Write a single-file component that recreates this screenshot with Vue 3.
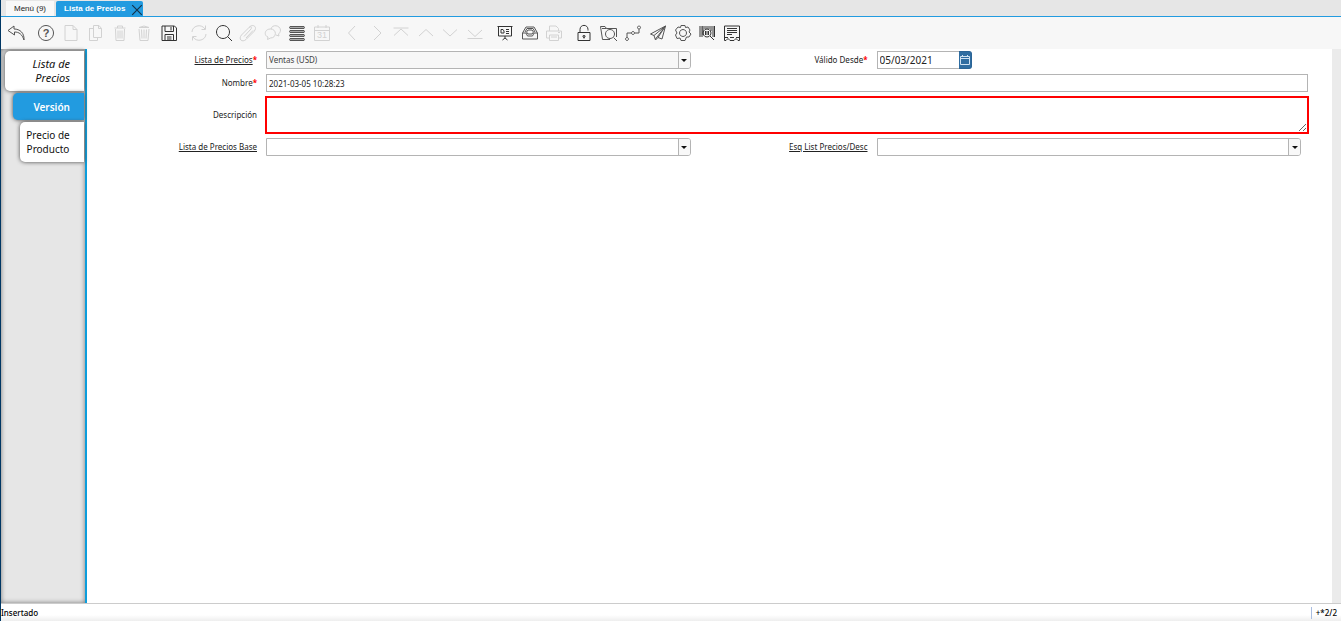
<script setup>
import { ref } from 'vue'

const priceList = ref('Ventas (USD)')
const name = ref('2021-03-05 10:28:23')
const validFrom = ref('05/03/2021')
const description = ref('')
const basePriceList = ref('')
const discountSchema = ref('')

const groups = [
  { size: 1, items: [
    { label: 'Deshacer', d: 'M8 3L2 7.500L8.500 12V9C13 9 16 11 18 17C18.500 10 14 6 8 6Z' }
  ] },
  { size: 6, items: [
    { label: 'Ayuda', d: 'M10 2.500a7.500 7.500 0 1 0 .01 0Z', text: '?', bold: true },
    { label: 'Nuevo', off: true, d: 'M4 2.500H12L16 6.500V17.500H4ZM12 2.500V6.500H16' },
    { label: 'Copiar', off: true, d: 'M8.500 2.500H14L16.500 5.500V14.500H8.500ZM13.500 2.500V5.500H16.500M8 5.500H4L4.500 5.500V17.500H12.500V15' },
    { label: 'Eliminar', off: true, d: 'M4.500 5H15.500M7.500 5V3H12.500V5M5.500 6L6 17.500H14L14.500 6M8 7.500V15.500M10 7.500V15.500M12 7.500V15.500' },
    { label: 'Eliminar selección', off: true, d: 'M5 4.500Q10 1.500 15 4.500ZM5 6L6 17.500H14L15 6M7.500 6.500L8 15.500M10 6.500V15.500M12.500 6.500L12 15.500' },
    { label: 'Guardar', strong: true, d: 'M3 3H15.500L17.500 5V17.500H3ZM6 3V8.500H14.500V3M12 4V7.500M6 17.500V11.500H14.500V17.500M8 14H12.500M8 16H12.500' }
  ] },
  { size: 6, items: [
    { label: 'Refrescar', off: true, d: 'M3 9C3 3 12 0 16 6M16.500 2.500V6.500H12.500M17 11C17 17 8 20 4 14M3.500 17.500V13.500H7.500' },
    { label: 'Buscar', strong: true, d: 'M9 2.500a6.500 6.500 0 1 0 .01 0ZM13.500 13.500L18 18' },
    { label: 'Adjunto', off: true, d: 'M6 13.500L13 6C14.500 4 12 3 11 4.500L3.500 12C0 16 4 20 8 16.500L16 8.500C20 4 15 0 11 4.500M8 15L15 7.500' },
    { label: 'Chat', off: true, d: 'M8 6C9 1 17 2 17.500 7C17.500 9 16.500 10 15.500 11L16 13L13 12M7.500 6C1 6 1 13 5 14L4.500 16.500L7.500 15C14 15 14 6 7.500 6Z' },
    { label: 'Cuadrícula', bars: true, d: 'M3 3.500H17Q18 4.500 17 5.500H3Q2 4.500 3 3.500ZM3 7.500H17Q18 8.500 17 9.500H3Q2 8.500 3 7.500ZM3 11.500H17Q18 12.500 17 13.500H3Q2 12.500 3 11.500ZM3 15.500H17Q18 16.500 17 17.500H3Q2 16.500 3 15.500Z' },
    { label: 'Calendario', off: true, d: 'M2.500 4H17.500V17.500H2.500ZM2.500 7.500H17.500M6 2V5M14 2V5', text: '31' }
  ] },
  { size: 6, items: [
    { label: 'Anterior', off: true, d: 'M13 3L6.500 10L13 17' },
    { label: 'Siguiente', off: true, d: 'M7 3L14 10L7 17' },
    { label: 'Primero', off: true, d: 'M2.500 5H17.500M3 12.500L10 6L17 12.500' },
    { label: 'Subir', off: true, d: 'M3 13L10 6.500L17 13' },
    { label: 'Bajar', off: true, d: 'M3 6.500L10 13L17 6.500' },
    { label: 'Último', off: true, d: 'M3 7L10 13.500L17 7M2.500 15.500H17.500' }
  ] },
  { size: 3, items: [
    { label: 'Informe', strong: true, d: 'M2.500 3.500H17.500M3.500 4V13H16.500V4M10 13V15M7.500 17L10 15L12.500 17M6 6.500H8L9 8V10H6ZM11 6.500H14M11 8.500H14M11 10.500H14' },
    { label: 'Archivo', d: 'M2.500 10L6 4H14L17.500 10V16H2.500ZM3 10H6L7.500 13H12.500L14 10H17M5 9L7 5.500H13L15 9M6.500 9L8 7H12L13.500 9L12 11H8Z' },
    { label: 'Imprimir', off: true, d: 'M5.500 8V3H12L14.500 5.500V8M5 15H2.500V8H17.500V15H15M5.500 12H14.500V17.500H5.500ZM7 14H13M14 9.500H16' }
  ] },
  { size: 7, items: [
    { label: 'Bloquear', strong: true, d: 'M4 9.500H16V17.500H4ZM6 9V6.500C6 1 14 1 14 6.500V7.500M10 12.500a1 1 0 1 0 .01 0ZM10 14V15.500' },
    { label: 'Detalle', d: 'M11 16.500H3.500L1.500 3.500H6L7.500 5.500H17.500V14M3 5.500H7.500M11 6.500a4.500 4.500 0 1 0 .01 0ZM14.500 14.500L18 18' },
    { label: 'Flujo', d: 'M4 14.500a1.500 1.500 0 1 0 .01 0ZM10 8.500a1.500 1.500 0 1 0 .01 0ZM16 3a1.500 1.500 0 1 0 .01 0ZM4 14.500V10H8.500M11.500 10H16V6' },
    { label: 'Solicitudes', d: 'M17.500 3L2.500 11L6 12.500L7.500 17L10 14.500L14 16ZM6 12.500L17.500 3L7.500 16M10 14.500L17.500 3' },
    { label: 'Proceso', d: 'M8 2.500H12L12.500 4.500L15 4L17 7L16 9L18 11L16 14L13.500 14L12 17.500H8L7 15L4 15.500L2.500 12L4 10L2.500 7L5 4L7.500 4.500ZM10 6.500a3.500 3.500 0 1 0 .01 0Z' },
    { label: 'Información de producto', strong: true, d: 'M3 3V14M5 3V14M6 3V12M8 3V6M10 3V6M12 3V6M14 3V8M16 3V14M17.500 3V14M10 6a4 4 0 1 0 .01 0ZM8.500 8V12M10 8V12M11.500 8V12M13 13L17 17' },
    { label: 'Formulario', strong: true, d: 'M2.500 14.500V3H17.500V14.500M5 5.500H15M5 7.500H15M5 9.500H15M5 11.500H10M2 14.500H6M8 14.500H12M14 14.500H18M2.500 14.500V17.500H4L6 15.500L8 17.500H12L14 15.500L16 17.500H17.500V14.500' }
  ] }
]
</script>

<template>
  <div class="window">
    <nav class="tabs" aria-label="Ventanas">
      <button class="tab">Menú (9)</button>
      <div class="tab active">
        <button class="tab-title">Lista de Precios</button>
        <button class="close" aria-label="Cerrar">
          <svg viewBox="0 0 10 10"><path d="M1 1L9 9M9 1L1 9" /></svg>
        </button>
      </div>
    </nav>

    <div class="toolbar" role="toolbar" aria-label="Acciones">
      <div v-for="(group, i) in groups" :key="i" class="group" :class="'g' + group.size">
        <button
          v-for="item in group.items"
          :key="item.label"
          class="tool"
          :class="{ strong: item.strong, bars: item.bars }"
          :disabled="item.off"
          :aria-label="item.label"
        >
          <svg viewBox="0 0 20 20">
            <path :d="item.d" />
            <text v-if="item.text" x="10" :y="item.bold ? 14 : 15" :class="{ bold: item.bold }">{{ item.text }}</text>
          </svg>
        </button>
      </div>
    </div>

    <div class="body">
      <aside class="side">
        <button class="level parent">Lista de Precios</button>
        <button class="level current">Versión</button>
        <button class="level child">Precio de Producto</button>
      </aside>

      <main class="content">
        <form class="form" @submit.prevent>
          <label for="price-list"><a href="#">Lista de Precios</a><b>*</b></label>
          <div class="combo readonly">
            <select id="price-list" v-model="priceList"><option>Ventas (USD)</option></select>
            <span class="arrow"></span>
          </div>
          <label for="valid-from">Válido Desde<b>*</b></label>
          <div class="date">
            <input id="valid-from" v-model="validFrom" type="text">
            <button type="button" aria-label="Abrir calendario">
              <svg viewBox="0 0 12 12"><path d="M1.500 2.500H10.500V10.500H1.500ZM1.500 4.500H10.500M3.500 1V3M8.500 1V3" /></svg>
            </button>
          </div>

          <label for="name">Nombre<b>*</b></label>
          <input id="name" v-model="name" class="text wide" type="text">

          <label for="description">Descripción</label>
          <textarea id="description" v-model="description" class="wide"></textarea>

          <label for="base-list"><a href="#">Lista de Precios Base</a></label>
          <div class="combo">
            <select id="base-list" v-model="basePriceList"><option value=""></option></select>
            <span class="arrow"></span>
          </div>
          <label for="schema"><a href="#">Esq List Precios/Desc</a></label>
          <div class="combo">
            <select id="schema" v-model="discountSchema"><option value=""></option></select>
            <span class="arrow"></span>
          </div>
        </form>
      </main>
    </div>

    <footer class="status">
      <span>Insertado</span>
      <span class="count">+*2/2</span>
    </footer>
  </div>
</template>

<style>
body { margin: 0; }
</style>

<style scoped>
* { box-sizing: border-box; }
button, input, select, textarea { font: inherit; color: inherit; margin: 0; padding: 0; border: 0; background: none; border-radius: 0; outline: 0; }
svg { display: block; fill: none; stroke: currentColor; }

.window {
  display: flex;
  flex-direction: column;
  min-height: 100vh;
  border-left: 1px solid #003764;
  background: #fff;
  color: #222;
  font: 8px/12px "Noto Sans", "Open Sans", sans-serif;
}

.tabs {
  display: flex;
  gap: 2px;
  height: 17px;
  padding: 1px 0 0 5px;
  background: #e6e6e6;
  border-bottom: 1px solid #229be0;
  font: 8px/14px "Liberation Sans", Arial, sans-serif;
}
.tab { height: 15px; padding: 0 8px; background: #f8f8f8; }
.tab.active { display: flex; padding: 0 0 0 8px; background: #229be0; color: #fff; font-weight: bold; border-radius: 2px 2px 0 0; }
.close { width: 12px; margin-left: 6px; color: #14324a; }
.close svg { width: 12px; height: 12px; margin-top: 2px; }

.toolbar { display: flex; gap: 10px; height: 32px; padding: 6px 0 0 5px; background: #f7f7f7; }
.group { display: flex; justify-content: space-between; height: 20px; }
.g1 { width: 20px; }
.g3 { width: 69px; }
.g6 { width: 143px; }
.g7 { width: 168px; }
.tool { width: 20px; height: 20px; color: #555; }
.tool.strong { color: #333; }
.tool:disabled { color: #d2d2d2; }
.tool svg { width: 20px; height: 20px; }
.tool.bars path { fill: #aaa; }
.tool text { fill: currentColor; stroke: none; font: 9px "Liberation Sans", Arial, sans-serif; text-anchor: middle; }
.tool text.bold { font-size: 11px; font-weight: bold; }

.body { display: flex; flex: 1; }
.side {
  display: flex;
  flex-direction: column;
  align-items: flex-end;
  gap: 2px;
  width: 86px;
  padding: 2px 1px 0 0;
  background: #e6e6e6;
  border-right: 2px solid #0c9ddb;
  box-shadow: inset 0 0 5px #777;
}
.level {
  width: 79px;
  height: 40px;
  padding: 0 14px 0 5px;
  border-radius: 5px 0 0 5px;
  background: #fff;
  box-shadow: 0 0 4px #444;
  color: #111;
  font-size: 10px;
  line-height: 14px;
  text-align: right;
}
.parent { font-size: 11px; font-style: italic; }
.current { width: 71px; height: 27px; background: #229be0; color: #fff; font-weight: 600; }
.child { width: 64px; padding: 0 8px 0 0; text-align: center; }

.content { flex: 1; padding: 2px 24px 0 0; border-right: 9px solid #ebebeb; }
.form {
  display: grid;
  grid-template-columns: 170px 1fr 161px 1fr;
  column-gap: 9px;
  row-gap: 5px;
  align-items: center;
}
.form label { text-align: right; white-space: nowrap; }
.form a { color: inherit; text-decoration: underline; text-underline-offset: 1px; }
.form b { color: #f00; }
.wide { grid-column: 2 / -1; }
.text { height: 18px; padding: 0 2px; border: 1px solid #b4b4b4; }
textarea { height: 38px; margin: -1px; border: 2px solid #f00; resize: vertical; }
.combo { position: relative; height: 18px; margin-right: 7px; }
.combo select { appearance: none; width: 100%; height: 18px; padding: 0 14px 0 2px; border: 1px solid #b4b4b4; border-radius: 0 3px 3px 0; color: #444; display: block; }
.readonly select { background: #f7f7f7; }
.arrow {
  position: absolute;
  top: 1px;
  right: 1px;
  display: grid;
  place-items: center;
  width: 12px;
  height: 16px;
  border-left: 1px solid #b4b4b4;
  border-radius: 0 2px 2px 0;
  background: #f8f8f8;
  pointer-events: none;
}
.arrow::after { content: ""; border: 3px solid transparent; border-top-color: #111; border-bottom: 0; }
.date { display: flex; height: 18px; }
.date input { width: 82px; padding: 0 2px; border: 1px solid #b4b4b4; border-right: 0; font-size: 10px; }
.date button { width: 13px; border: 1px solid #2a6496; border-left: 0; border-radius: 0 3px 3px 0; background: #2f6da1; color: #cfe2f2; }
.date svg { width: 12px; height: 12px; }

.status { display: flex; justify-content: space-between; height: 18px; border-top: 1px solid #ccc; background: linear-gradient(#fff 11px, #eee); color: #000; font-weight: 500; line-height: 17px; }
.count { height: 12px; margin-top: 3px; padding: 0 4px; border-left: 1px solid #a9bde0; line-height: 12px; }
</style>
